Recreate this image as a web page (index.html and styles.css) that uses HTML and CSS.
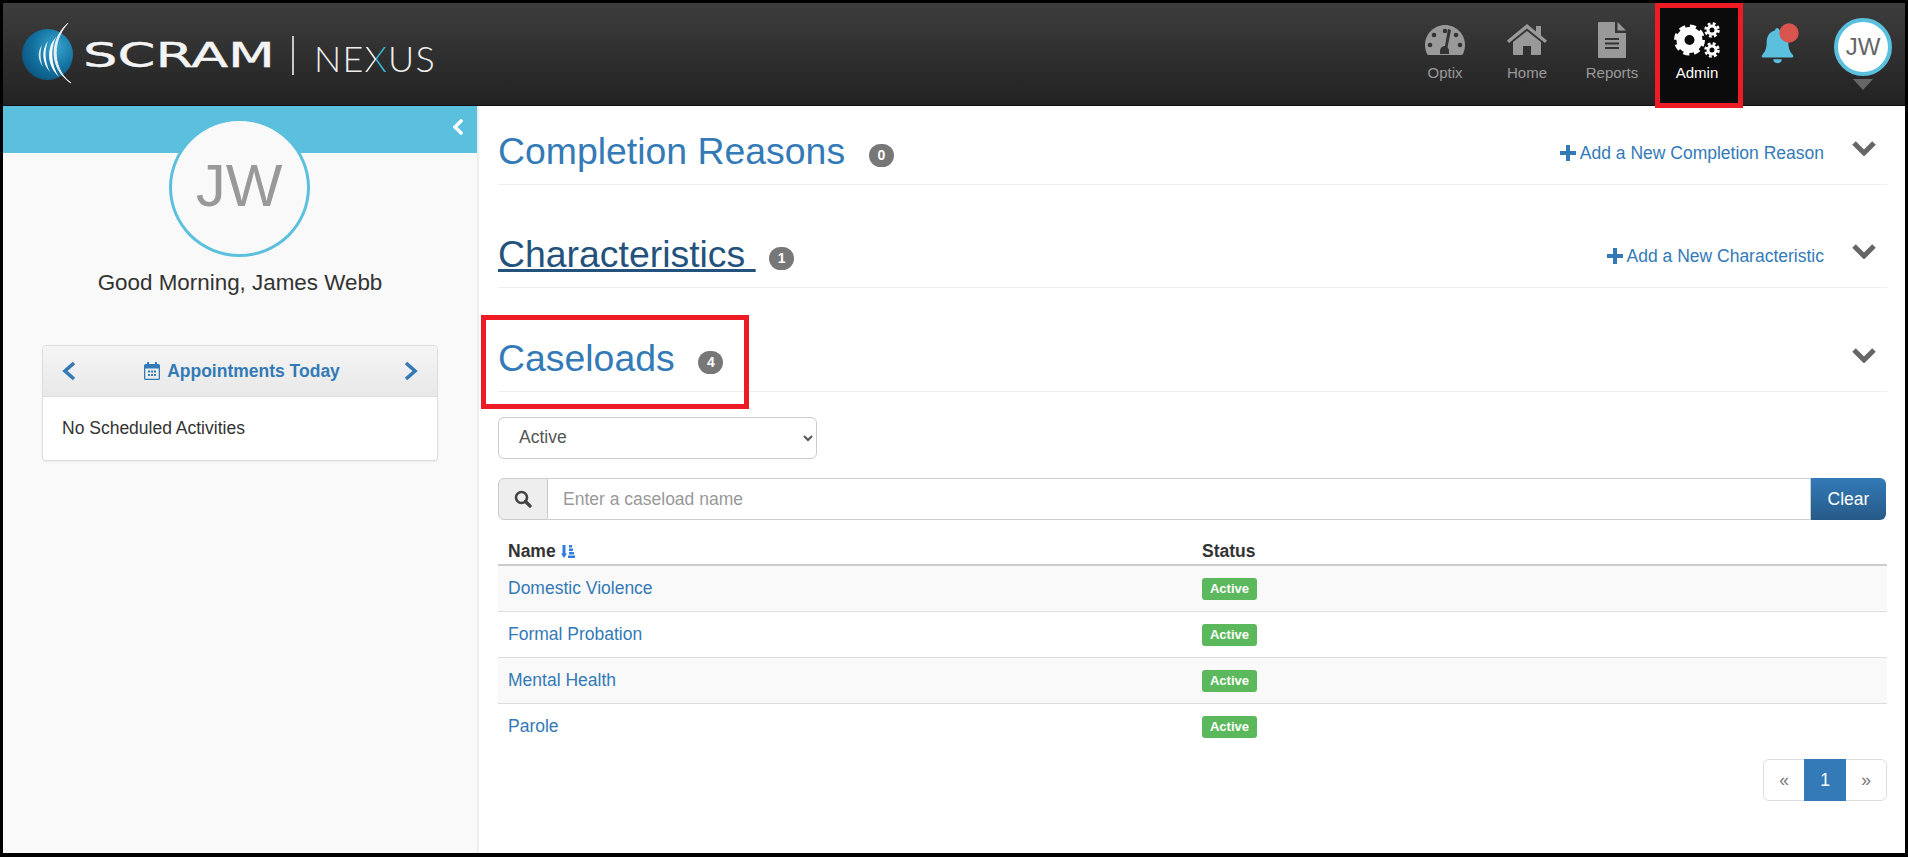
FILE: index.html
```html
<!DOCTYPE html>
<html lang="en">
<head>
<meta charset="utf-8">
<title>SCRAM Nexus - Admin</title>
<link rel="stylesheet" href="styles.css">
</head>
<body>
<div class="frame">
  <header class="topbar">
    <a class="logo" href="#">
      <svg class="logo-svg" width="290" height="70" viewBox="0 0 290 70">
        <defs>
          <radialGradient id="globe" cx="0.65" cy="0.35" r="0.8">
            <stop offset="0" stop-color="#3aa6d0"/>
            <stop offset="0.55" stop-color="#12709f"/>
            <stop offset="1" stop-color="#0b4f78"/>
          </radialGradient>
        </defs>
        <circle cx="29.500" cy="36.500" r="25.500" fill="url(#globe)"/>
        <path d="M50 5 C32 21 30 50 53 65 C37 54 31 26 50 5Z" fill="#e8eef2" stroke="#e8eef2" stroke-width="1"/>
        <path d="M38 19 C28 30 29 48 41 59 C33 47 32 31 38 19Z" fill="#fff"/>
        <path d="M30 23 C23 32 24 45 32 54 C27 44 26 33 30 23Z" fill="#fff"/>
        <path d="M24 27 C19 34 20 42 25 49 C22 41 22 34 24 27Z" fill="#dfe9ee"/>
        <text class="logo-scram" x="65" y="49" textLength="192" lengthAdjust="spacingAndGlyphs">SCRAM</text>
        <rect x="274" y="18" width="2" height="39" fill="#c8c8c8"/>
      </svg>
      <span class="logo-nexus-text">NE<span class="logo-x">X</span>US</span>
    </a>
    <nav class="nav">
      <a class="nav-item nav-optix" href="#">
        <svg width="40" height="32" viewBox="0 0 40 32"><path fill="#999" d="M20 1C9 1 0 10 0 21c0 3 .7 6 2 9 .4.6 1 1 1.700 1h32.600c.7 0 1.300-.4 1.700-1 1.300-3 2-6 2-9C40 10 31 1 20 1z"/><g fill="#333"><circle cx="20" cy="7" r="2.300"/><circle cx="9" cy="11" r="2.300"/><circle cx="5" cy="21" r="2.300"/><circle cx="35" cy="21" r="2.300"/><circle cx="31" cy="11" r="2.300"/><path d="M23 5l3 1-3.500 17.500a4 4 0 0 1 1.500 3.500v3h-9v-3a5 5 0 0 1 5-5z"/></g></svg>
        <span>Optix</span>
      </a>
      <a class="nav-item nav-home" href="#">
        <svg width="40" height="32" viewBox="0 0 40 32"><path fill="#999" d="M20 7 6 18v12c0 .7.500 1 1 1h9v-9h8v9h9c.5 0 1-.3 1-1V18z"/><path fill="#999" d="M20 0 0 16.500l2 2.500L20 4.500 38 19l2-2.500-6-5V2h-5v5.500z"/></svg>
        <span>Home</span>
      </a>
      <a class="nav-item nav-reports" href="#">
        <svg width="28" height="36" viewBox="0 0 28 36"><path fill="#999" d="M1 0h16v11h11v24a1 1 0 0 1-1 1H1a1 1 0 0 1-1-1V1a1 1 0 0 1 1-1z"/><path fill="#999" d="M19.500 0 28 8.500h-8.500z"/><path fill="#333" d="M7 16h14v2H7zM7 20.500h14v2H7zM7 25h14v2H7z"/></svg>
        <span>Reports</span>
      </a>
      <a class="nav-item nav-active" href="#">
        <svg width="46" height="36" viewBox="0 0 46 36">
          <g fill="none" stroke="#fff">
            <circle cx="15.500" cy="18" r="9" stroke-width="8"/>
            <circle cx="15.500" cy="18" r="13.500" stroke-width="4" stroke-dasharray="6 4.600"/>
            <circle cx="38" cy="8" r="4" stroke-width="3"/>
            <circle cx="38" cy="8" r="6.500" stroke-width="2.500" stroke-dasharray="2.800 2.300"/>
            <circle cx="38" cy="28" r="4" stroke-width="3"/>
            <circle cx="38" cy="28" r="6.500" stroke-width="2.500" stroke-dasharray="2.800 2.300"/>
          </g>
        </svg>
        <span>Admin</span>
      </a>
      <a class="nav-bell" href="#">
        <svg width="38" height="42" viewBox="0 0 38 42">
          <g transform="scale(.94)">
            <path fill="#5bc0de" d="M16 2c1.500 0 2.500 1 2.500 2.500C25 6 28 11 28 17c0 7 2 11 5 14 .8 1 .2 2.500-1 2.500H1c-1.200 0-1.800-1.500-1-2.500 3-3 5-7 5-14 0-6 3-11 9-12.500C14 3 14.800 2 16 2z"/>
            <path fill="#5bc0de" d="M12 35.500h9a4.500 4 0 0 1-9 0z"/>
          </g>
          <circle cx="27" cy="7" r="9.700" fill="#d9534f"/>
        </svg>
      </a>
      <a class="nav-user" href="#">
        <span class="user-circle">JW</span>
        <span class="user-caret"></span>
      </a>
    </nav>
  </header>

  <div class="content">
    <aside class="sidebar">
      <div class="side-band">
        <svg class="side-collapse" width="10" height="16" viewBox="0 0 10 16"><path d="M8 2 2 8l6 6" fill="none" stroke="#fff" stroke-width="3.400" stroke-linecap="square"/></svg>
      </div>
      <div class="side-avatar">JW</div>
      <p class="greeting">Good Morning, James Webb</p>
      <section class="appts">
        <div class="appts-head">
          <svg width="16" height="22" viewBox="0 0 16 22"><path d="M13 3 4 11l9 8" fill="none" stroke="#337ab7" stroke-width="3.600"/></svg>
          <span class="appts-title">
            <svg width="16" height="18" viewBox="0 0 16 18"><g fill="#337ab7"><path d="M3 0h2v3H3zM11 0h2v3h-2z"/><path d="M1.500 2h13A1.500 1.500 0 0 1 16 3.500v13a1.500 1.500 0 0 1-1.500 1.500h-13A1.500 1.500 0 0 1 0 16.500v-13A1.500 1.500 0 0 1 1.500 2zM1.300 6.500v10c0 .2 0 .2.200.2h13c.2 0 .2 0 .2-.2v-10z"/><path d="M4 8.500h2v2H4zM7 8.500h2v2H7zM10 8.500h2v2h-2zM4 12h2v2H4zM7 12h2v2H7zM10 12h2v2h-2z"/></g></svg>
            Appointments Today
          </span>
          <svg width="16" height="22" viewBox="0 0 16 22"><path d="M3 3l9 8-9 8" fill="none" stroke="#337ab7" stroke-width="3.600"/></svg>
        </div>
        <div class="appts-body">No Scheduled Activities</div>
      </section>
    </aside>

    <main class="main">
      <section class="sec sec-first">
        <h1 class="sec-title"><a href="#">Completion Reasons&nbsp;</a> <span class="badge">0</span></h1>
        <a class="sec-add" href="#"><svg width="16" height="16" viewBox="0 0 16 16"><path fill="#337ab7" d="M6 0h4v6h6v4h-6v6H6v-6H0V6h6z"/></svg>Add a New Completion Reason</a>
        <svg class="sec-chev" width="26" height="16" viewBox="0 0 26 16"><path d="M3 3l10 10L23 3" fill="none" stroke="#666" stroke-width="5"/></svg>
      </section>
      <section class="sec">
        <h1 class="sec-title"><a class="is-hover" href="#">Characteristics&nbsp;</a> <span class="badge">1</span></h1>
        <a class="sec-add" href="#"><svg width="16" height="16" viewBox="0 0 16 16"><path fill="#337ab7" d="M6 0h4v6h6v4h-6v6H6v-6H0V6h6z"/></svg>Add a New Characteristic</a>
        <svg class="sec-chev" width="26" height="16" viewBox="0 0 26 16"><path d="M3 3l10 10L23 3" fill="none" stroke="#666" stroke-width="5"/></svg>
      </section>
      <section class="sec sec-caseloads">
        <h1 class="sec-title"><a href="#">Caseloads&nbsp;</a> <span class="badge">4</span></h1>
        <svg class="sec-chev" width="26" height="16" viewBox="0 0 26 16"><path d="M3 3l10 10L23 3" fill="none" stroke="#666" stroke-width="5"/></svg>
      </section>

      <select class="status-select"><option>Active</option><option>Inactive</option></select>

      <div class="search">
        <span class="search-addon"><svg width="18" height="18" viewBox="0 0 18 18"><circle cx="7.500" cy="7.500" r="5.500" fill="none" stroke="#444" stroke-width="2.600"/><path d="M11.500 11.500 16 16" stroke="#444" stroke-width="3.200" stroke-linecap="round"/></svg></span>
        <input class="search-input" type="text" placeholder="Enter a caseload name">
        <button class="search-clear" type="button">Clear</button>
      </div>

      <table class="grid">
        <thead>
          <tr><th>Name <svg class="sort" width="14" height="13" viewBox="0 0 14 13"><path fill="#2f7de0" d="M1.500 0h3v8.500H6l-3 4.500-3-4.500h1.500z"/><path fill="#2f7de0" d="M8 0h3v2.500H8zM8 3.500h4V6H8zM8 7h5v2.500H8zM7 10.500h7V13H7z"/></svg></th><th>Status</th></tr>
        </thead>
        <tbody>
          <tr><td><a href="#">Domestic Violence</a></td><td><span class="label">Active</span></td></tr>
          <tr><td><a href="#">Formal Probation</a></td><td><span class="label">Active</span></td></tr>
          <tr><td><a href="#">Mental Health</a></td><td><span class="label">Active</span></td></tr>
          <tr><td><a href="#">Parole</a></td><td><span class="label">Active</span></td></tr>
        </tbody>
      </table>

      <div class="pager-row">
        <ul class="pager">
          <li><a href="#">«</a></li>
          <li class="current"><a href="#">1</a></li>
          <li><a href="#">»</a></li>
        </ul>
      </div>
    </main>
  </div>

  <div class="note note-admin"></div>
  <div class="note note-caseloads"></div>
</div>
</body>
</html>
```
FILE: styles.css
```css
* { box-sizing: border-box; }
html, body { margin: 0; padding: 0; height: 100%; overflow: hidden; background: #fff; }
body { font-family: "Liberation Sans", Arial, sans-serif; font-size: 17.5px; color: #333; }
a { color: #337ab7; text-decoration: none; }

.frame { position: relative; width: 1908px; height: 857px; border: 3px solid #000; border-bottom-width: 4px; display: flex; flex-direction: column; overflow: hidden; }

.topbar { height: 103px; flex: none; display: flex; justify-content: space-between; background: linear-gradient(#3d3d3d, #222); border-bottom: 1px solid #111; }
.logo { position: relative; display: block; width: 440px; padding: 15px 0 0 15px; }
.logo-svg { display: block; }
.logo-scram { font-family: "DejaVu Sans", sans-serif; font-size: 34px; fill: #f4f4f4; stroke: #f4f4f4; stroke-width: .4px; }
.logo-nexus-text { position: absolute; left: 311px; top: 33px; font-family: Lato, sans-serif; font-weight: 300; font-size: 36px; letter-spacing: 1.200px; color: #eee; }
.logo-x { background: linear-gradient(100deg, #eee 50%, #38b6dc 50%); -webkit-background-clip: text; background-clip: text; color: transparent; }

.nav { display: flex; align-items: flex-start; padding-right: 13px; }
.nav-item { height: 102px; display: flex; flex-direction: column; align-items: center; justify-content: flex-start; padding-top: 19px; color: #999; font-size: 15px; }
.nav-item svg { height: 36px; }
.nav-item span { margin-top: 6px; }
.nav-optix { width: 84px; }
.nav-home { width: 80px; }
.nav-reports { width: 90px; }
.nav-active { background: #0b0b0b; color: #fff; width: 85px; padding-right: 5px; }
.nav-bell { width: 92px; padding: 23px 0 0 20px; }
.nav-bell svg { display: block; overflow: visible; }
.nav-user { width: 58px; display: flex; flex-direction: column; align-items: center; padding-top: 15px; }
.user-circle { width: 58px; height: 58px; border-radius: 50%; background: #fff; border: 4px solid #5bc0de; display: flex; align-items: center; justify-content: center; font-size: 24px; color: #666; }
.user-caret { margin-top: 3px; width: 0; height: 0; border-left: 10px solid transparent; border-right: 10px solid transparent; border-top: 11px solid #666; }

.content { flex: 1; display: flex; min-height: 0; }

.sidebar { width: 476px; flex: none; background: #f9f9f9; border-right: 2px solid #eee; display: flex; flex-direction: column; align-items: center; position: relative; }
.side-band { width: 100%; height: 47px; background: #5bc0de; display: flex; justify-content: flex-end; padding: 13px 14px 0 0; }
.side-collapse { display: block; }
.side-avatar { width: 141px; height: 139px; margin: -35px 2px 0 0; padding-bottom: 4px; border-radius: 50%; border: 3px solid #5bc0de; background: #f9f9f9; color: #999; font-size: 60px; display: flex; align-items: center; justify-content: center; position: relative; }
.greeting { margin: 14px 0 0; font-size: 22.400px; line-height: 24px; }

.appts { width: 396px; margin-top: 50px; background: #fff; border: 1px solid #ddd; border-radius: 4px; box-shadow: 0 1px 1px rgba(0,0,0,.05); }
.appts-head { height: 51px; display: flex; align-items: center; justify-content: space-between; padding: 0 18px; background: linear-gradient(#f5f5f5, #e8e8e8); border-bottom: 1px solid #ddd; border-radius: 3px 3px 0 0; }
.appts-title { display: flex; align-items: center; gap: 7px; margin-left: 4px; font-weight: bold; font-size: 17.500px; color: #337ab7; }
.appts-body { padding: 20px 19px 19px; height: 63px; font-size: 17.500px; line-height: 23px; }

.main { flex: 1; padding: 0 18px 0 19px; min-width: 0; background: #fff; }
.sec { position: relative; height: 79px; margin-top: 24px; border-bottom: 1px solid #eee; }
.sec-first { margin-top: 0; }
.sec-caseloads { margin-top: 25px; }
.sec-title { position: absolute; left: 0; top: 23px; margin: 0; font-size: 37.400px; font-weight: 400; line-height: 44px; white-space: nowrap; }
.sec-title a { margin-right: 3px; }
.is-hover { color: #23527c; text-decoration: underline; }
.badge { display: inline-block; vertical-align: 4px; width: 25px; height: 23px; border-radius: 12px; background: #777; color: #fff; font-size: 14px; font-weight: bold; line-height: 23px; text-align: center; }
.sec-add { position: absolute; right: 63px; top: 35px; display: flex; align-items: center; gap: 4px; font-size: 17.500px; line-height: 24px; }
.sec-chev { position: absolute; right: 10px; top: 34px; }

.status-select { display: block; width: 319px; height: 42px; margin-top: 25px; padding: 0 16px 2px; font: 17.500px "Liberation Sans", Arial, sans-serif; color: #555; background: #fff; border: 1px solid #ccc; border-radius: 6px; }

.search { display: flex; height: 42px; margin: 19px 1px 0 0; }
.search-addon { width: 50px; display: flex; align-items: center; justify-content: center; background: #eee; border: 1px solid #ccc; border-radius: 6px 0 0 6px; }
.search-input { flex: 1; min-width: 0; border: 1px solid #ccc; border-left: 0; padding: 0 15px; font: 17.500px "Liberation Sans", Arial, sans-serif; color: #555; outline: 0; }
.search-input::placeholder { color: #999; }
.search-clear { width: 75px; border: 0; border-radius: 0 6px 6px 0; background: linear-gradient(#337ab7, #265a88); color: #fff; font: 17.500px "Liberation Sans", Arial, sans-serif; }

.grid { width: 100%; border-collapse: collapse; margin-top: 18px; table-layout: fixed; }
.grid th { height: 27px; padding: 0 10px; text-align: left; font-size: 17.500px; font-weight: bold; color: #333; border-bottom: 2px solid #ccc; }
.grid th:first-child { width: 694px; }
.grid td { height: 46px; padding: 0 10px; font-size: 17.500px; border-top: 1px solid #ddd; vertical-align: middle; }
.grid tbody tr:first-child td { border-top: 0; }
.grid tbody tr:nth-child(odd) { background: #f9f9f9; }
.sort { vertical-align: -1px; }
.label { display: block; width: 55px; height: 22px; margin-top: 1px; border-radius: 3px; background: #5cb85c; color: #fff; font-size: 13px; font-weight: bold; line-height: 22px; text-align: center; }

.pager-row { display: flex; justify-content: flex-end; margin-top: 10px; }
.pager { display: flex; margin: 0; padding: 0; list-style: none; height: 42px; border: 1px solid #ddd; border-radius: 6px; }
.pager li { width: 40px; display: flex; }
.pager a { flex: 1; display: flex; align-items: center; justify-content: center; color: #777; font-size: 17.500px; }
.pager .current { width: 42px; margin: -1px 0; }
.pager .current a { background: #337ab7; color: #fff; }

.note { position: absolute; border: 5px solid #ed1c24; pointer-events: none; }
.note-admin { left: 1652px; top: 0; width: 88px; height: 105px; }
.note-caseloads { left: 478px; top: 312px; width: 268px; height: 94px; }
```
